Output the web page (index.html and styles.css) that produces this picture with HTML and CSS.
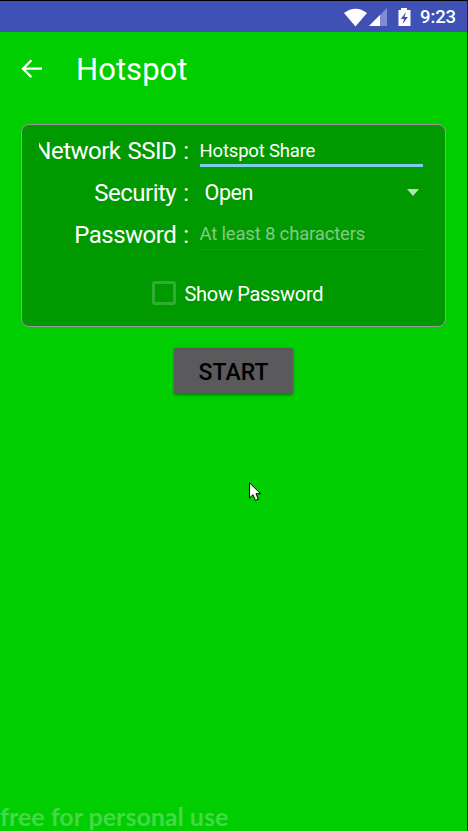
FILE: index.html
```html
<!DOCTYPE html>
<html lang="en">
<head>
<meta charset="utf-8">
<title>Hotspot</title>
<link rel="stylesheet" href="styles.css">
</head>
<body>
<div class="screen">
  <div class="status-bar">
    <svg class="status-icons" width="67" height="22" viewBox="0 0 67 22">
      <path class="solid" d="M0 6Q11.500 -2.500 23 6L11.500 19.500Z"/>
      <path class="dim" d="M43 1V19H25Z"/>
      <path class="solid" d="M36 8V19H25Z"/>
      <path class="solid" d="M57 1H63V3H66.500V19H54.500V3H57Z"/>
      <path class="bolt" d="M62 5L56.800 12H60L58.500 17L64 10H60.500Z"/>
    </svg>
    <span class="clock">9:23</span>
  </div>
  <header class="toolbar">
    <svg class="back" width="22" height="20" viewBox="0 0 22 20">
      <path d="M21 9.700H2M10.400 1.300L2 9.700L10.400 18.100"/>
    </svg>
    <h1>Hotspot</h1>
  </header>
  <main>
    <section class="card">
      <div class="row ssid">
        <div class="label"><span>Network SSID :</span></div>
        <div class="field focused"><span>Hotspot Share</span></div>
      </div>
      <div class="row security">
        <div class="label"><span>Security :</span></div>
        <div class="select"><span>Open</span><i class="caret"></i></div>
      </div>
      <div class="row password">
        <div class="label"><span>Password :</span></div>
        <div class="field hint"><span>At least 8 characters</span></div>
      </div>
      <div class="check-row"><i class="box"></i><span>Show Password</span></div>
    </section>
    <button class="start">START</button>
  </main>
  <div class="watermark">free for personal use</div>
  <svg class="cursor" width="13" height="20" viewBox="0 0 13 20">
    <path d="M.5 .8V16L4 12.700L6.400 18.400L9.300 17.200L7 11.700H11.600Z"/>
  </svg>
</div>
</body>
</html>
```

FILE: styles.css
```css
* { box-sizing: border-box; }
body { margin: 0; font-family: Roboto, "Liberation Sans", sans-serif; color: #fff; }
.screen {
  position: relative;
  display: flex;
  flex-direction: column;
  width: 468px;
  height: 831px;
  overflow: hidden;
  background: #00ce00;
  border-top: 1px solid #000;
  border-right: 1px solid #063906;
}
.status-bar {
  display: flex;
  align-items: center;
  justify-content: flex-end;
  height: 31px;
  padding-right: 11px;
  background: #3f51b5;
}
.status-icons { margin-right: 9px; margin-top: 2px; }
.solid { fill: #fff; }
.dim { fill: #fff; opacity: .35; }
.bolt { fill: #3f51b5; }
.clock { font-size: 18.500px; line-height: 22px; margin-top: 1px; letter-spacing: -.1px; font-weight: 500; }
.toolbar { display: flex; align-items: center; height: 74px; padding-left: 21px; }
.back { fill: none; stroke: #fff; stroke-width: 2.300; margin-top: -1px; }
h1 { margin: 2px 0 0 33px; font-size: 31px; line-height: 38px; font-weight: 400; letter-spacing: .05px; }
main { display: flex; flex-direction: column; align-items: center; padding: 18px 21px 0; }
.card {
  width: 425px;
  height: 203px;
  margin-right: 1px;
  padding: 5px 21px 0 17px;
  background: #009a00;
  border: 1.500px solid #999;
  border-radius: 8px;
}
.row { display: flex; height: 42px; line-height: 42px; }
.label {
  display: flex;
  justify-content: flex-end;
  width: 150px;
  margin-right: 11px;
  overflow: hidden;
  font-size: 24px;
  letter-spacing: -.5px;
  word-spacing: 1.500px;
  white-space: nowrap;
}
.field { width: 223px; height: 37px; font-size: 18.500px; letter-spacing: -.18px; }
.focused { border-bottom: 3px solid #80caee; }
.hint { height: 36px; line-height: 40px; color: #80cc80; border-bottom: 1px solid #10a110; }
.select { display: flex; align-items: center; justify-content: space-between; width: 223px; padding: 0 4px 0 5px; font-size: 21.500px; letter-spacing: -.4px; }
.caret { border: 6.500px solid transparent; border-top: 7px solid #b2e0b2; border-bottom: 0; margin-top: -1px; }
.check-row { display: flex; align-items: center; height: 24px; margin: 25px 0 0 113px; font-size: 20px; letter-spacing: -.3px; }
.check-row span { margin-top: 2px; }
.box { width: 24px; height: 24px; margin-right: 9px; border: 3px solid #30ac30; border-radius: 3px; }
.start {
  width: 119px;
  height: 46px;
  margin-top: 21px;
  padding: 3px 0 0;
  border: 0;
  border-radius: 2px;
  background: #5a595b;
  box-shadow: 0 1px 3px rgba(0, 0, 0, .4);
  color: #000;
  font: 500 23px/44px Roboto, sans-serif;
}
.watermark { margin-top: auto; height: 28px; font: 700 25px/27px Lato, sans-serif; color: #46d846; white-space: nowrap; }
.cursor { position: absolute; left: 249px; top: 481px; fill: #fff; stroke: #000; stroke-width: 1; }
```
